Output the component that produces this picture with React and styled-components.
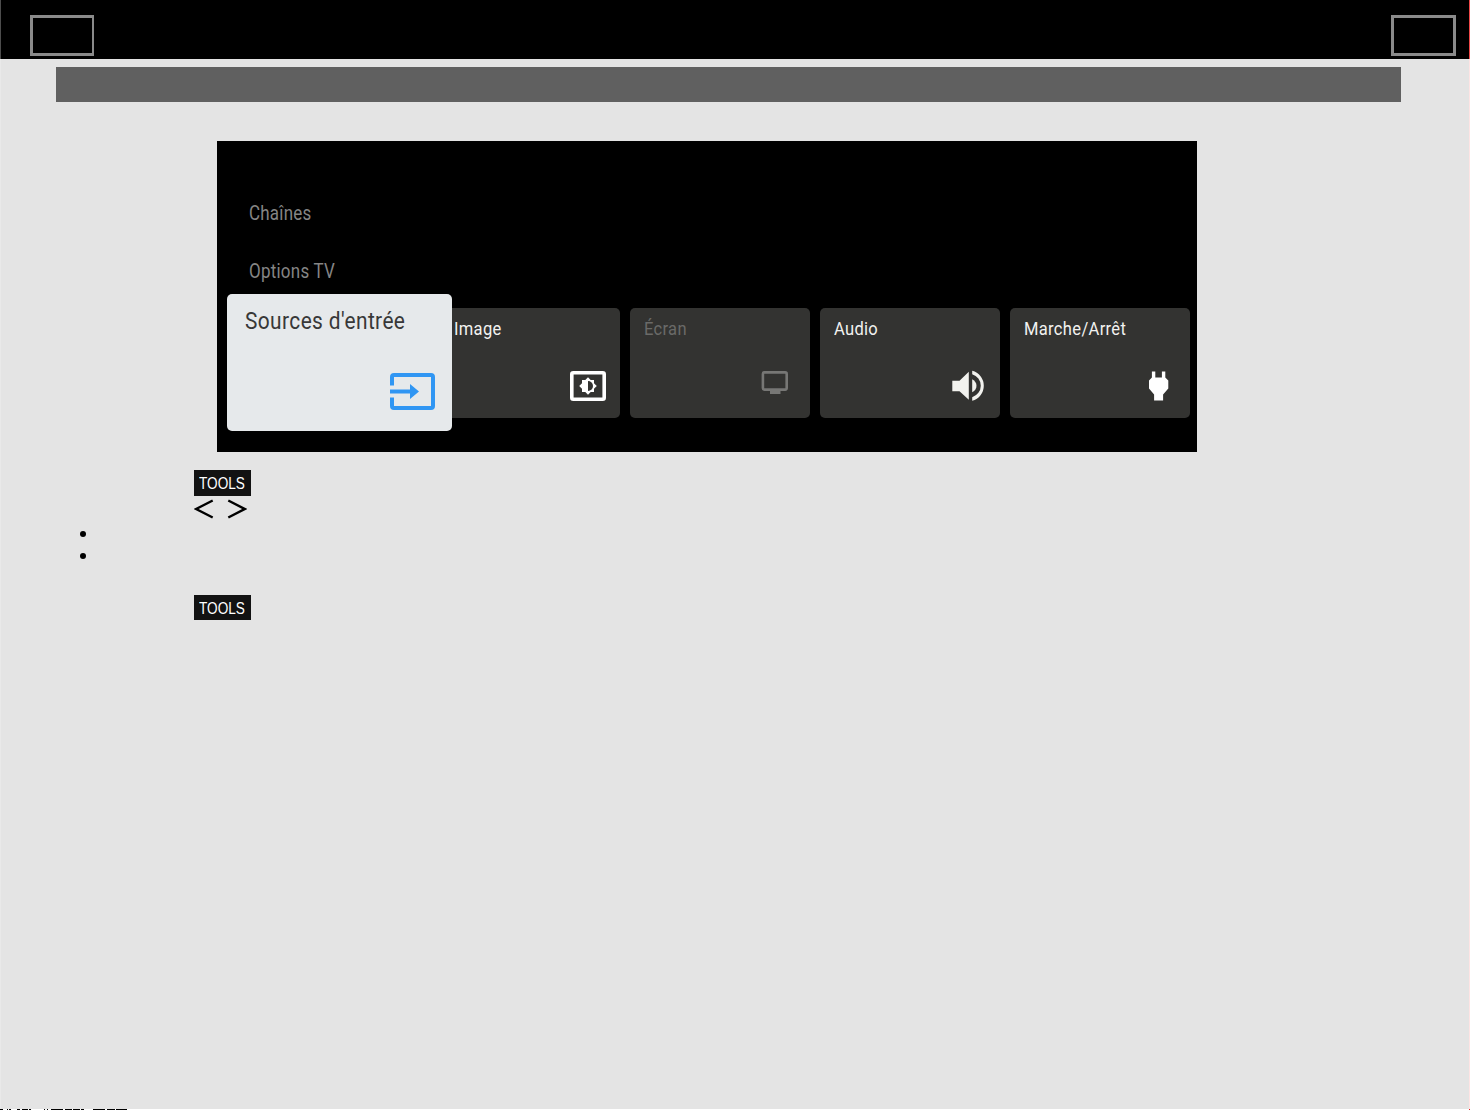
import React from 'react';
import styled, { createGlobalStyle } from 'styled-components';

const GlobalStyle = createGlobalStyle`
  * {
    box-sizing: border-box;
  }
  body {
    margin: 0;
    background: #e4e4e4;
  }
`

const Page = styled.div`
  display: flex;
  flex-direction: column;
  width: 1470px;
  height: 1110px;
  background: #e4e4e4;
  border-left: 1px solid #e9e9e9;
  border-right: 1px solid #ffe4e4;
  font-family: Roboto, sans-serif;
`

const TopBar = styled.header`
  display: flex;
  justify-content: space-between;
  flex: none;
  height: 59px;
  margin: 0 -1px;
  padding: 15px 13px 0 29px;
  background: #000;
  border-left: 1px solid #4d4d4d;
  border-right: 1px solid #f04848;
`

const NavBox = styled.div`
  width: ${props => props.$width}px;
  height: 41px;
  border: 3px solid #8a8a8a;
  border-right-width: ${props => props.$right}px;
`

const TitleBar = styled.div`
  flex: none;
  height: 35px;
  margin: 8px 68px 0 55px;
  background: #606060;
`

const Panel = styled.section`
  display: flex;
  flex-direction: column;
  flex: none;
  width: 980px;
  height: 311px;
  margin: 39px 0 0 216px;
  padding: 61px 0 0 10px;
  background: #000;
`

const RowTitle = styled.div`
  height: 24px;
  margin: 0 0 ${props => props.$gap}px 22px;
  color: #858585;
  font-size: 19.5px;
  line-height: 24px;
`

const Condensed = styled.span`
  display: inline-block;
  white-space: nowrap;
  letter-spacing: ${props => props.$spacing || 0}px;
  transform: scaleX(${props => props.$scale || 0.87});
  transform-origin: left;
`

const Cards = styled.div`
  display: flex;
  align-items: center;
  height: 137px;
`

const Card = styled.div`
  display: flex;
  flex-direction: column;
  flex: none;
  width: 180px;
  height: 110px;
  margin-right: 10px;
  padding: 9px 0 0 14px;
  border-radius: 5px;
  background: #333331;
  color: ${props => props.$dim ? '#6a6a68' : '#f2f2f0'};
  font-size: 19px;
  line-height: 24px;
`

const ActiveCard = styled(Card)`
  position: relative;
  z-index: 1;
  width: 225px;
  height: 137px;
  margin-right: -12px;
  padding: 12px 0 0 18px;
  background: #e6e9eb;
  color: #383838;
  font-size: 24px;
  line-height: 30px;
`

const Icon = styled.svg`
  display: block;
  margin: ${props => props.$top}px ${props => props.$right}px 0 auto;
`

const Notes = styled.section`
  display: flex;
  flex-direction: column;
  align-items: flex-start;
  flex: 1;
  padding: 18px 0 0 78px;
`

const Tools = styled.div`
  flex: none;
  width: 57px;
  height: ${props => props.$height}px;
  margin-left: 115px;
  padding-left: 5px;
  background: #121212;
  color: #fff;
  font-family: 'Liberation Sans', sans-serif;
  font-size: 16px;
  line-height: 27px;
`

const Arrows = styled.svg`
  display: block;
  flex: none;
  margin: 3px 0 12px 115px;
`

const Bullet = styled.div`
  width: 6px;
  height: 6px;
  margin: 0 0 ${props => props.$gap}px 1px;
  border-radius: 50%;
  background: #000;
`

const Footer = styled.svg`
  display: block;
  flex: none;
  margin: 0 -1px;
`

// [start, end] of every dark dash along the bottom edge
const dashes = [
  [0, 3], [7, 8], [9, 11], [17, 20], [22, 28], [29, 31],
  [44, 45], [47, 48], [51, 63], [65, 72], [73, 80], [81, 84],
  [93, 105], [107, 115], [116, 127],
]

const InputIcon = () => (
  <Icon $top={37} $right={16} width="46" height="38" viewBox="0.5 0.5 46 38">
    <path d="M2.5 13V4.5Q2.5 2.5 4.5 2.5H41.5Q43.5 2.5 43.5 4.5V33.5Q43.5 35.5 41.5 35.5H4.5Q2.5 35.5 2.5 33.5V25" fill="none" stroke="#3096f3" strokeWidth="4" />
    <path d="M0.5 17H20.5V11.5L29.5 19L20.5 26.5V21H0.5Z" fill="#3096f3" />
  </Icon>
)

const ImageIcon = () => (
  <Icon $top={30} $right={14} width="36" height="30" viewBox="0 0 36 30">
    <rect x="1.8" y="1.8" width="32.4" height="26.4" rx="1.5" fill="none" stroke="#fff" strokeWidth="3.6" />
    <path d="M18 6.2L20.7 9H24V12.3L26.8 15L24 17.7V21H20.7L18 23.8L15.3 21H12V17.7L9.2 15L12 12.3V9H15.3Z" fill="#fff" />
    <path d="M18 10A5 5 0 0 1 18 20Z" fill="#333331" />
  </Icon>
)

const ScreenIcon = () => (
  <Icon $top={30} $right={22} width="27" height="24" viewBox="-0.5 0 27 24">
    <rect x="1.4" y="1.4" width="23.8" height="17.2" rx="1.5" fill="none" stroke="#777775" strokeWidth="2.6" />
    <path d="M8.5 19H19V23H8.5Z" fill="#777775" />
  </Icon>
)

const AudioIcon = () => (
  <Icon $top={29} $right={15} width="33" height="32" viewBox="0 0.3 33 32">
    <path d="M0.3 11H7.5L16.8 2V30L7.5 21.5H0.3Z" fill="#f2f2ee" />
    <path d="M20.2 9.5Q24.5 12 24.5 16T20.2 22.5Z" fill="#f2f2ee" />
    <path d="M20.2 1A15.5 15.5 0 0 1 20.2 31V27.5A12 12 0 0 0 20.2 4.5Z" fill="#f2f2ee" />
  </Icon>
)

const PlugIcon = () => (
  <Icon $top={30} $right={21} width="20" height="30" viewBox="0.4 0 20 30">
    <path d="M3.3 0.5H6.7V6.5H13.3V0.5H16.7V6.5L19.7 9.5V17.5L14.5 23.5V29.5H5.5V23.5L0.4 17.5V9.5L3.3 6.5Z" fill="#fff" />
  </Icon>
)

const App = () => {

  return (
    <>
      <GlobalStyle />
      <Page>
        <TopBar>
          <NavBox $width={64} $right={2} />
          <NavBox $width={65} $right={3} />
        </TopBar>
        <TitleBar />
        <Panel>
          <RowTitle $gap={34}><Condensed $spacing={0.25}>Chaînes</Condensed></RowTitle>
          <RowTitle $gap={10}><Condensed $spacing={0.28}>Options TV</Condensed></RowTitle>
          <Cards>
            <ActiveCard>
              <Condensed $spacing={0.46}>Sources d'entrée</Condensed>
              <InputIcon />
            </ActiveCard>
            <Card>
              <Condensed $spacing={0.35}>Image</Condensed>
              <ImageIcon />
            </Card>
            <Card $dim>
              <Condensed $spacing={0.35}>Écran</Condensed>
              <ScreenIcon />
            </Card>
            <Card>
              <Condensed $spacing={0.35}>Audio</Condensed>
              <AudioIcon />
            </Card>
            <Card>
              <Condensed $spacing={0.38}>Marche/Arrêt</Condensed>
              <PlugIcon />
            </Card>
          </Cards>
        </Panel>
        <Notes>
          <Tools $height={26}><Condensed $scale={0.85}>TOOLS</Condensed></Tools>
          <Arrows width="53" height="20" viewBox="0 0 53 20" fill="none" stroke="#000" strokeWidth="2.4">
            <path d="M18.7 1.5L2 10L18.7 18.5" />
            <path d="M34.3 1.5L50.7 10L34.3 18.5" />
          </Arrows>
          <Bullet $gap={16} />
          <Bullet $gap={36} />
          <Tools $height={25}><Condensed $scale={0.85}>TOOLS</Condensed></Tools>
        </Notes>
        <Footer width="1470" height="1" viewBox="0 0 1470 1">
          <rect width="1470" height="1" fill="#fff" />
          {dashes.map(([start, end]) => (
            <rect key={start} x={start} width={end - start} height="1" fill="#000" />
          ))}
          <rect x="1469" width="1" height="1" fill="#e02020" />
        </Footer>
      </Page>
    </>
  )
}
export default App;
